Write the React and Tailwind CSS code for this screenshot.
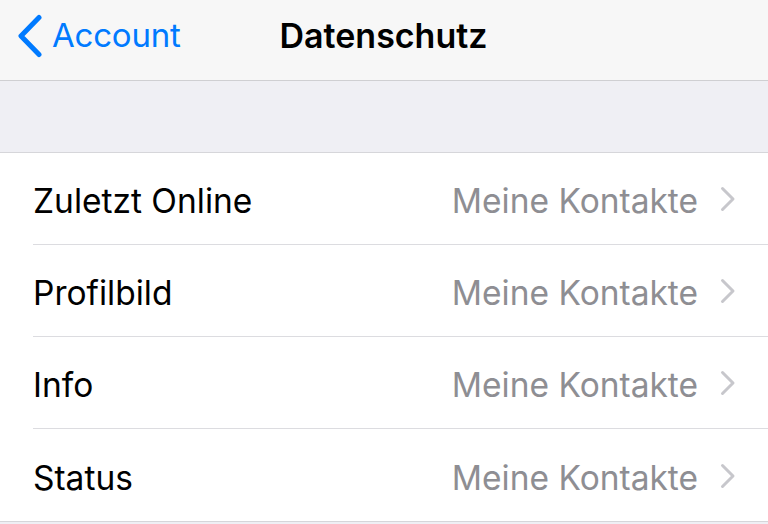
import React from "react";

const rows = ["Zuletzt Online", "Profilbild", "Info", "Status"];

function Chevron() {
  return (
    <svg width="16" height="26" viewBox="0 0 16 26" fill="none">
      <path d="M2.5 2.5 L13 13 L2.5 23.5" stroke="#c7c7cc" strokeWidth="3" strokeLinecap="round" strokeLinejoin="round" />
    </svg>
  );
}

export default function App() {
  return (
    <div
      className="w-[768px] h-[524px] overflow-hidden bg-[#efeff4] flex flex-col"
      style={{ fontFamily: "Inter, 'Liberation Sans', Arial, sans-serif" }}
    >
      <div className="relative h-[81px] shrink-0 bg-[#f7f7f7] border-b border-[#cfcfd2] flex items-center pb-[9px]">
        <div className="flex items-center pl-[17px] gap-[9px] text-[#007aff]">
          <svg width="26" height="44" viewBox="0 0 26 44" fill="none">
            <path d="M22 3.5 L4 22 L22 40.5" stroke="#007aff" strokeWidth="5" strokeLinecap="round" strokeLinejoin="round" />
          </svg>
          <span className="text-[33px] tracking-[-0.2px] leading-none">Account</span>
        </div>
        <div className="absolute left-0 right-0 top-0 bottom-[9px] flex items-center justify-center pointer-events-none">
          <span className="text-[34px] font-semibold text-black leading-none ml-[-1px]">Datenschutz</span>
        </div>
      </div>
      <div className="h-[71px] shrink-0" />
      <div className="bg-white border-t border-b border-[#d6d6da] shrink-0">
        {rows.map((label, i) => (
          <div key={label} className="pl-[33px]">
            <div
              className={
                "h-[92px] flex items-center pr-[32px] pt-[7px] " +
                (i < rows.length - 1 ? "border-b border-[#dcdce0]" : "")
              }
            >
              <span className="text-[33.5px] text-black leading-none">{label}</span>
              <span className="ml-auto text-[33.5px] text-[#8e8e93] leading-none mr-[22px]">
                Meine Kontakte
              </span>
              <div className="-mt-[6px]">
                <Chevron />
              </div>
            </div>
          </div>
        ))}
      </div>
      <div className="flex-1" />
    </div>
  );
}
